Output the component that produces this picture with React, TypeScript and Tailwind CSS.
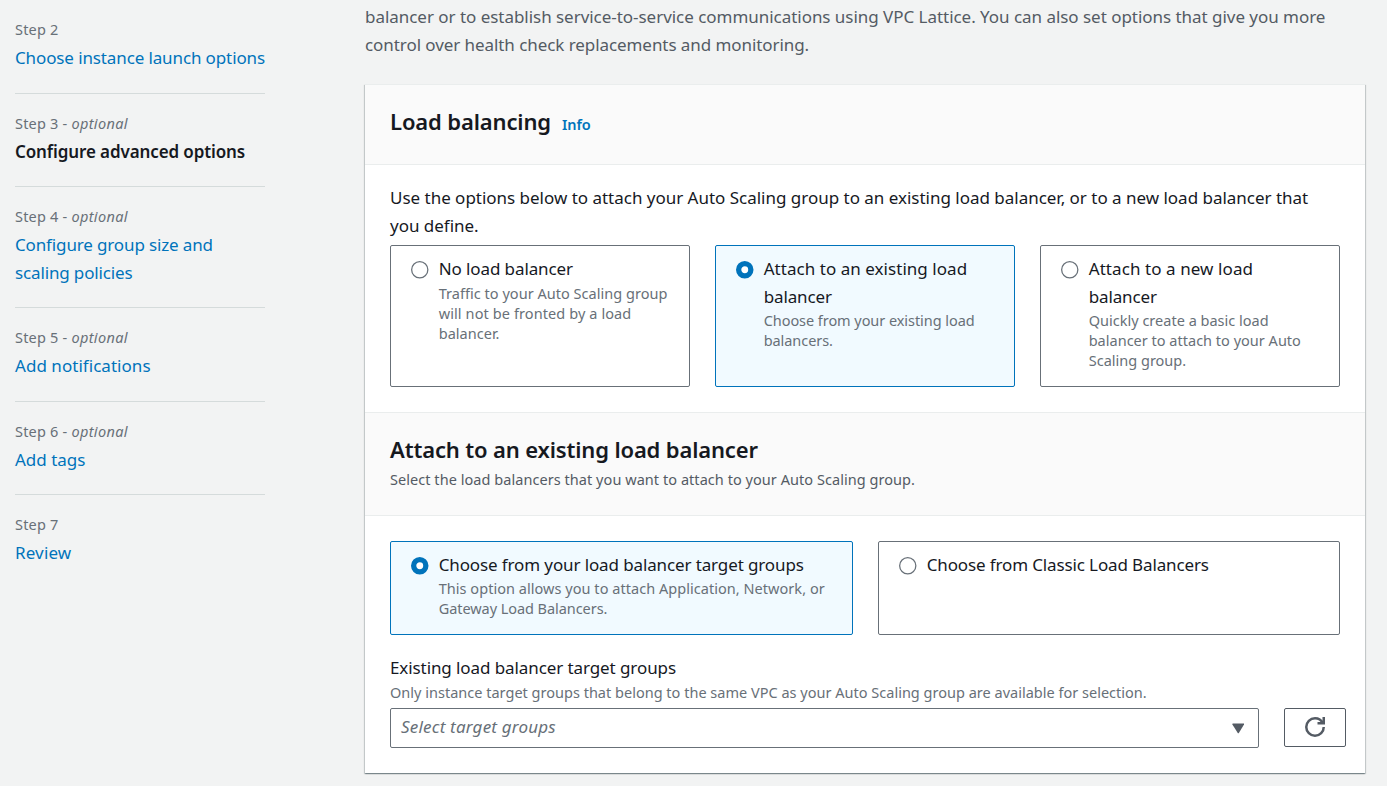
import type { ReactNode } from 'react';

type Step = { label: string; optional?: boolean; lines: ReactNode; current?: boolean; box: string };

const steps: Step[] = [
  {
    label: 'Step 2',
    lines: <span className="tracking-[-0.12px]">Choose instance launch options</span>,
    box: 'pb-[21px]',
  },
  {
    label: 'Step 3',
    optional: true,
    current: true,
    lines: <span className="tracking-[-0.11px]">Configure advanced options</span>,
    box: 'pt-[19px] pb-5',
  },
  {
    label: 'Step 4',
    optional: true,
    lines: (
      <span className="tracking-[-0.14px]">
        Configure group size and
        <br />
        scaling policies
      </span>
    ),
    box: 'pt-[19px] pb-5',
  },
  {
    label: 'Step 5',
    optional: true,
    lines: <span className="tracking-[0.04px]">Add notifications</span>,
    box: 'pt-[19px] pb-[21px]',
  },
  { label: 'Step 6', optional: true, lines: <span>Add tags</span>, box: 'pt-[19px] pb-5' },
  {
    label: 'Step 7',
    lines: <span className="tracking-[0.15px]">Review</span>,
    box: 'pt-[19px] pb-5',
  },
];

function StepNav() {
  return (
    <nav className="w-[250px] shrink-0 pt-[19px]">
      <ol>
        {steps.map((s, i) => (
          <li
            key={s.label}
            className={`${s.box} ${i < steps.length - 1 ? 'border-b border-[#d5dbdb]' : ''}`}
          >
            <div className="h-5 text-[14.5px] leading-5 tracking-[0.2px] text-[#687078]">
              {s.label}
              {s.optional && (
                <>
                  {' - '}
                  <i className="tracking-[0.35px]">optional</i>
                </>
              )}
            </div>
            <a
              className={`mt-[5px] block whitespace-nowrap text-[17px] leading-7 ${
                s.current ? 'font-semibold text-[#16191f]' : 'text-[#0073bb]'
              }`}
            >
              {s.lines}
            </a>
          </li>
        ))}
      </ol>
    </nav>
  );
}

function Radio({ checked }: { checked?: boolean }) {
  return (
    <svg className="mt-[6px] shrink-0" width="18" height="18" viewBox="0 0 18 18">
      {checked ? (
        <circle cx="8.75" cy="8.75" r="6.1" fill="#fff" stroke="#0073bb" strokeWidth="5.3" />
      ) : (
        <circle cx="8.75" cy="8.75" r="8.1" fill="#fff" stroke="#687078" strokeWidth="1.25" />
      )}
    </svg>
  );
}

function Tile({
  checked,
  title,
  children,
  className,
  hint = '-mt-px',
}: {
  checked?: boolean;
  title: ReactNode;
  children?: ReactNode;
  className: string;
  hint?: string;
}) {
  return (
    <label
      className={`flex gap-[9.7px] rounded-[2px] border pt-[9px] pl-[20px] ${
        checked ? 'border-[#0073bb] bg-[#f1faff]' : 'border-[#687078] bg-white'
      } ${className}`}
    >
      <Radio checked={checked} />
      <span className="block whitespace-nowrap">
        <span className="block text-[17px] leading-7 text-[#16191f]">{title}</span>
        <span className={`block text-[14.5px] leading-5 text-[#687078] ${hint}`}>{children}</span>
      </span>
    </label>
  );
}

function RefreshIcon() {
  return (
    <svg
      className="-mt-px"
      width="20"
      height="20"
      viewBox="0 0 16 16"
      fill="none"
      stroke="#545b64"
      strokeWidth="2"
    >
      <path d="M15 8c0 3.87-3.13 7-7 7s-7-3.13-7-7 3.13-7 7-7c2.79 0 5.2 1.63 6.33 4" />
      <path d="M10 5h5V0" />
    </svg>
  );
}

export default function App() {
  return (
    <div className="flex h-[786px] w-[1387px] overflow-hidden bg-[#f2f3f3] pl-[15px] font-['Noto_Sans','Open_Sans',sans-serif] text-[17px] leading-7 text-[#16191f]">
      <StepNav />
      <main className="ml-[100px] w-[1000px] shrink-0 pt-[3px]">
        <p className="whitespace-nowrap text-[#545b64]">
          <span className="tracking-[-0.035px]">
            balancer or to establish service-to-service communications using VPC Lattice. You can
            also set options that give you more
          </span>
          <br />
          <span className="tracking-[-0.07px]">
            control over health check replacements and monitoring.
          </span>
        </p>

        <section className="mt-[25px] h-[689px] border-t border-[#eaeded] bg-white shadow-[0_1px_1px_0_rgba(0,28,36,0.3),1px_1px_1px_0_rgba(0,28,36,0.15),-1px_1px_1px_0_rgba(0,28,36,0.15)]">
          <header className="flex h-20 items-baseline gap-[11px] border-b border-[#eaeded] bg-[#fafafa] px-[25px] pt-[22px]">
            <h2 className="text-[22px] leading-7 font-semibold tracking-[-0.13px]">
              Load balancing
            </h2>
            <a className="text-[14.5px] leading-5 font-semibold tracking-[-0.1px] text-[#0073bb]">
              Info
            </a>
          </header>

          <div className="h-[247px] px-[25px] pt-[19px]">
            <p className="whitespace-nowrap">
              <span className="tracking-[-0.015px]">
                Use the options below to attach your Auto Scaling group to an existing load
                balancer, or to a new load balancer that
                <br />
                you define.
              </span>
            </p>
            <div className="mt-[5px] flex gap-[25px]">
              <Tile
                className="h-[142px] w-[300px]"
                hint="mt-0 tracking-[0.03px]"
                title={<span className="tracking-[-0.1px]">No load balancer</span>}
              >
                Traffic to your Auto Scaling group
                <br />
                <span className="tracking-[0.1px]">will not be fronted by a load</span>
                <br />
                balancer.
              </Tile>
              <Tile
                checked
                className="h-[142px] w-[300px]"
                hint="-mt-px tracking-[-0.06px]"
                title={
                  <>
                    <span className="tracking-[0.04px]">Attach to an existing load</span>
                    <br />
                    <span className="tracking-[-0.12px]">balancer</span>
                  </>
                }
              >
                Choose from your existing load
                <br />
                balancers.
              </Tile>
              <Tile
                className="h-[142px] w-[300px]"
                hint="-mt-px tracking-[0.01px]"
                title={
                  <>
                    <span className="tracking-[0.08px]">Attach to a new load</span>
                    <br />
                    <span className="tracking-[-0.12px]">balancer</span>
                  </>
                }
              >
                Quickly create a basic load
                <br />
                balancer to attach to your Auto
                <br />
                Scaling group.
              </Tile>
            </div>
          </div>

          <header className="h-[104px] border-y border-[#eaeded] bg-[#fafafa] px-[25px] pt-[22px]">
            <h2 className="text-[22px] leading-7 font-semibold tracking-[-0.15px]">
              Attach to an existing load balancer
            </h2>
            <p className="mt-[6px] text-[14.5px] leading-5 tracking-[0.05px] text-[#545b64]">
              Select the load balancers that you want to attach to your Auto Scaling group.
            </p>
          </header>

          <div className="px-[25px] pt-[25px]">
            <div className="flex gap-[25px]">
              <Tile
                checked
                className="h-[94px] w-[463px]"
                title={
                  <span className="tracking-[-0.12px]">
                    Choose from your load balancer target groups
                  </span>
                }
              >
                <span className="tracking-[0.04px]">
                  This option allows you to attach Application, Network, or
                </span>
                <br />
                <span className="tracking-[-0.06px]">Gateway Load Balancers.</span>
              </Tile>
              <Tile
                className="h-[94px] w-[462px]"
                title={
                  <span className="tracking-[-0.13px]">Choose from Classic Load Balancers</span>
                }
              />
            </div>
            <div className="mt-[19px] tracking-[-0.09px]">Existing load balancer target groups</div>
            <p className="text-[14.5px] leading-5 tracking-[0.01px] whitespace-nowrap text-[#687078]">
              Only instance target groups that belong to the same VPC as your Auto Scaling group are
              available for selection.
            </p>
            <div className="mt-[6px] flex items-start gap-[25px]">
              <button className="flex h-10 w-[869px] shrink-0 items-center justify-between rounded-[2px] border border-[#687078] bg-white pr-[14px] pl-[10px]">
                <i className="-mt-0.5 tracking-[0.2px] text-[#687078]">Select target groups</i>
                <svg width="12.5" height="11" viewBox="0 0 12.5 11" fill="#545b64">
                  <path d="M.8.5h10.9q.9 0 .4.9L7 9.8q-.7 1-1.4 0L.4 1.4Q0 .5.8.5z" />
                </svg>
              </button>
              <button className="flex h-[39px] w-[62px] shrink-0 items-center justify-center rounded-[2px] border border-[#545b64] bg-white">
                <RefreshIcon />
              </button>
            </div>
          </div>
        </section>
      </main>
    </div>
  );
}
